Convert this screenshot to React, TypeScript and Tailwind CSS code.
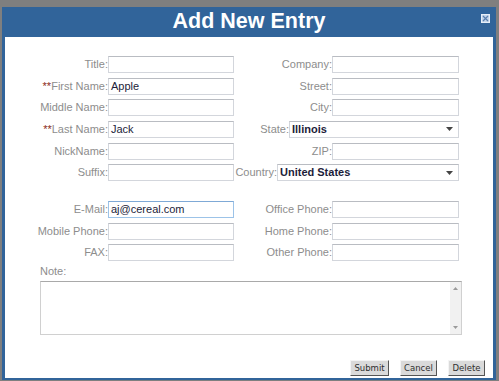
import React from "react";

const font = { fontFamily: '"Liberation Sans", Arial, sans-serif' };

function Field({ label, value, req, focus, w = "w-[126px]" }: { label: string; value?: string; req?: boolean; focus?: boolean; w?: string }) {
  return (
    <div className="flex items-center justify-end h-[17px]">
      <span className="text-[11px] text-[#8d8d8d] leading-none whitespace-nowrap">
        {req && <span className="text-[#8b2a22]">**</span>}
        {label}:
      </span>
      <div
        className={`${w} h-[17px] bg-white border flex items-center px-[2px] text-[11px] text-[#1d1d3a] leading-none ${
          focus ? "border-[#9cc3e8] border-t-[#7fa9d6]" : "border-[#d3d6dc] border-t-[#b9bcc2]"
        }`}
      >
        {value}
      </div>
    </div>
  );
}

function SelectField({ label, value, w }: { label: string; value: string; w: string }) {
  return (
    <div className="flex items-center justify-end h-[17px]">
      <span className="text-[11px] text-[#8d8d8d] leading-none whitespace-nowrap">{label}:</span>
      <div className={`${w} h-[17px] bg-white border border-[#d3d6dc] border-t-[#b9bcc2] flex items-center justify-between pl-[2px] pr-[5px]`}>
        <span className="text-[11px] text-[#1d1d3a] leading-none font-semibold">{value}</span>
        <svg width="7" height="4" viewBox="0 0 7 4">
          <path d="M0 0 L7 0 L3.5 4 Z" fill="#444" />
        </svg>
      </div>
    </div>
  );
}

function Btn({ children }: { children: React.ReactNode }) {
  return (
    <div
      className="h-[16px] px-[3px] bg-[#dadada] border border-t-[#f4f4f4] border-l-[#f4f4f4] border-r-[#555] border-b-[#555] flex items-center justify-center text-[8.5px] text-[#2e2e2e] leading-none"
      style={{ fontFamily: '"DejaVu Sans", Verdana, sans-serif' }}
    >
      {children}
    </div>
  );
}

export default function App() {
  return (
    <div className="w-[499px] h-[381px] bg-[#7f7f7f] pt-[7px] pl-[2px] pr-[3px] pb-[1px]" style={font}>
      <div className="w-full h-full bg-[#31649a] flex flex-col px-[3px] pb-[2px]">
        <div className="h-[30px] relative flex items-center justify-center">
          <span className="text-white text-[21.5px] font-bold leading-none">Add New Entry</span>
          <div className="absolute right-[3px] top-[7px] w-[9px] h-[9px] bg-[#c4d5ea] border border-[#e6eef8] flex items-center justify-center">
            <svg width="7" height="7" viewBox="0 0 7 7">
              <path d="M1 1 L6 6 M6 1 L1 6" stroke="#5a7fae" strokeWidth="1.2" />
            </svg>
          </div>
        </div>
        <div className="flex-1 bg-white flex flex-col pt-[19px]">
          <div className="flex">
            <div className="w-[229px] flex flex-col gap-[4.67px]">
              <Field label="Title" />
              <Field label="First Name" value="Apple" req />
              <Field label="Middle Name" />
              <Field label="Last Name" value="Jack" req />
              <Field label="NickName" />
              <Field label="Suffix" />
            </div>
            <div className="w-[225px] flex flex-col gap-[4.67px]">
              <Field label="Company" w="w-[127px]" />
              <Field label="Street" w="w-[127px]" />
              <Field label="City" w="w-[127px]" />
              <SelectField label="State" value="Illinois" w="w-[170px]" />
              <Field label="ZIP" w="w-[127px]" />
              <SelectField label="Country" value="United States" w="w-[182px]" />
            </div>
          </div>
          <div className="flex mt-[19.7px]">
            <div className="w-[229px] flex flex-col gap-[4.67px]">
              <Field label="E-Mail" value="aj@cereal.com" focus />
              <Field label="Mobile Phone" />
              <Field label="FAX" />
            </div>
            <div className="w-[225px] flex flex-col gap-[4.67px]">
              <Field label="Office Phone" w="w-[127px]" />
              <Field label="Home Phone" w="w-[127px]" />
              <Field label="Other Phone" w="w-[127px]" />
            </div>
          </div>
          <div className="pl-[35px] mt-[4px] text-[11px] text-[#8d8d8d] leading-[13px]">Note:</div>
          <div className="ml-[35px] mt-[3px] w-[422px] h-[54px] border border-[#d0d0d0] border-t-[#a9a9a9] flex justify-end">
            <div className="w-[11px] h-full bg-[#f1f1f1] flex flex-col items-center justify-between py-[5px]">
              <svg width="5" height="3" viewBox="0 0 5 3"><path d="M0 3 L5 3 L2.5 0 Z" fill="#9a9a9a" /></svg>
              <svg width="5" height="3" viewBox="0 0 5 3"><path d="M0 0 L5 0 L2.5 3 Z" fill="#9a9a9a" /></svg>
            </div>
          </div>
          <div className="flex justify-end gap-[11px] pr-[8px] mt-[25px]">
            <div className="w-[39px]"><Btn>Submit</Btn></div>
            <div className="w-[37px]"><Btn>Cancel</Btn></div>
            <div className="w-[37px]"><Btn>Delete</Btn></div>
          </div>
        </div>
      </div>
    </div>
  );
}
